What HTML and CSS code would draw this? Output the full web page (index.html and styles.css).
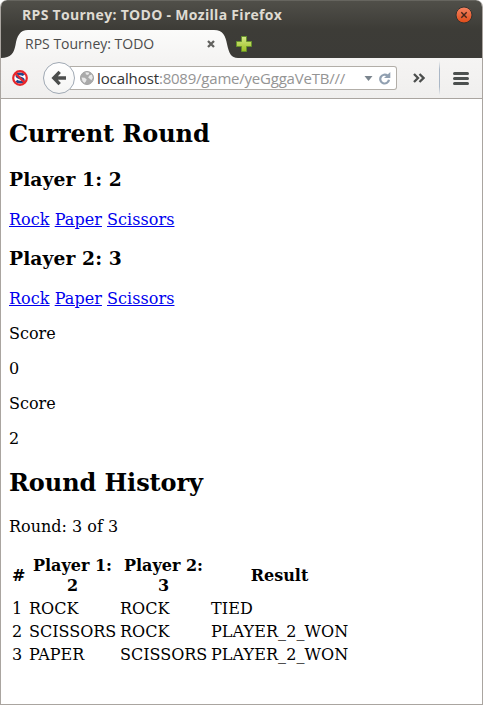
FILE: index.html
```html
<!DOCTYPE html>
<html lang="en">
<head>
<meta charset="utf-8">
<title>RPS Tourney: TODO</title>
<link rel="stylesheet" href="styles.css">
</head>
<body>
<div class="window">
  <header class="frame">
    <div class="titlebar">
      <span class="title">RPS Tourney: TODO - Mozilla Firefox</span>
      <svg class="close" width="18" height="18" viewBox="0 0 18 18">
        <defs><linearGradient id="orange" x1="0" y1="0" x2="0" y2="1"><stop offset="0" stop-color="#f58463"/><stop offset="1" stop-color="#df4b17"/></linearGradient></defs>
        <circle cx="9" cy="9" r="8" fill="url(#orange)" stroke="#34332f"/>
        <path d="M6.3 6.3l5.4 5.4M11.7 6.3l-5.4 5.4" stroke="#45251b" stroke-width="1.4"/>
      </svg>
    </div>
    <div class="tabs">
      <div class="tab">
        <svg class="tab-shape" width="238" height="29" viewBox="0 0 238 29">
          <defs><linearGradient id="tabfill" x1="0" y1="0" x2="0" y2="1"><stop offset="0" stop-color="#fbfbfa"/><stop offset="1" stop-color="#f5f4f3"/></linearGradient></defs>
          <path d="M0 28C10 28 13 23 14.5 15C16 6 19 0 27 0H213C222 0 224.5 6 226 14C228 23 230 28 237 28V29H0Z" fill="url(#tabfill)"/>
        </svg>
        <span class="tab-label">RPS Tourney: TODO</span>
        <svg class="tab-close" width="8" height="8" viewBox="0 0 8 8"><path d="M1 1l6 6M7 1L1 7" stroke="#62625f" stroke-width="2.3"/></svg>
      </div>
      <svg class="plus" width="16" height="16" viewBox="0 0 16 16">
        <defs><linearGradient id="green" x1="0" y1="0" x2="0" y2="1"><stop offset="0" stop-color="#d5e88a"/><stop offset="1" stop-color="#9dbf20"/></linearGradient></defs>
        <path d="M5.5.5h5v5h5v5h-5v5h-5v-5h-5v-5h5z" fill="url(#green)" stroke="#67922c"/>
      </svg>
    </div>
  </header>
  <nav class="toolbar">
    <svg class="noscript" width="16" height="16" viewBox="0 0 16 16">
      <circle cx="8" cy="8" r="7" fill="#fff"/>
      <path d="M11.6 5.4C10.8 3.6 5 3.2 4.9 5.8C4.9 8.2 11.4 7.4 11.4 10.2C11.3 12.8 5.8 12.6 4.400 10.600" fill="none" stroke="#23488f" stroke-width="2.800"/>
      <circle cx="8" cy="8" r="6.800" fill="none" stroke="#e8262b" stroke-width="2.200"/>
      <path d="M3 3l10 10" stroke="#e8262b" stroke-width="2.200"/>
    </svg>
    <div class="back">
      <svg width="16" height="16" viewBox="0 0 16 16"><path d="M8.7 1.8L2.8 8l5.9 6.2M3 8h12" fill="none" stroke="#4c4e4d" stroke-width="3.4"/></svg>
    </div>
    <div class="address">
      <svg class="globe" width="14" height="14" viewBox="0 0 14 14">
        <circle cx="7" cy="7" r="6.5" fill="#aaa" stroke="#a2a2a2"/>
        <path d="M5.500 1.200l3.200.2.4 1.500-1.800 1.100-1.500-.7zM1.500 6.600l3.200.2 2 1.600-.8 2-1.600 1.600-1.800-2zM9.300 4.500l2.500-1 1 3.200-1.400 2.500-1.700-1.500-1.500-1.300z" fill="#e8e8e8"/>
      </svg>
      <span class="url"><span class="host">localhost</span><span class="path">:8089/game/yeGggaVeTB///</span></span>
      <svg class="url-tools" width="32" height="14" viewBox="0 0 32 14">
        <path d="M4.500 5h8L8.500 10z" fill="#7b858e"/>
        <path d="M27.500 4.700A4.400 4.400 0 1 0 29 8.800" fill="none" stroke="#91a0b1" stroke-width="2.200"/>
        <path d="M30.300 1v6H24z" fill="#91a0b1"/>
      </svg>
    </div>
    <svg class="more" width="12" height="10" viewBox="0 0 12 10"><path d="M1 1l4 4-4 4M6.5 1l4 4-4 4" fill="none" stroke="#4c4e4d" stroke-width="2.3"/></svg>
    <span class="divider"></span>
    <svg class="menu" width="16" height="13" viewBox="0 0 16 13"><path d="M1.5 1.5h13M1.5 6.5h13M1.5 11.5h13" stroke="#4c504f" stroke-width="3" stroke-linecap="round"/></svg>
  </nav>
  <main class="page">
    <h2>Current Round</h2>
    <h3>Player 1: 2</h3>
    <p><a href="#">Rock</a> <a href="#">Paper</a> <a href="#">Scissors</a></p>
    <h3>Player 2: 3</h3>
    <p><a href="#">Rock</a> <a href="#">Paper</a> <a href="#">Scissors</a></p>
    <p>Score</p>
    <p>0</p>
    <p>Score</p>
    <p>2</p>
    <h2>Round History</h2>
    <p>Round: 3 of 3</p>
    <table>
      <colgroup><col class="c-num"><col class="c-player"><col class="c-player"><col class="c-result"></colgroup>
      <thead><tr><th>#</th><th>Player 1: 2</th><th>Player 2: 3</th><th>Result</th></tr></thead>
      <tbody>
        <tr><td>1</td><td>ROCK</td><td>ROCK</td><td>TIED</td></tr>
        <tr><td>2</td><td>SCISSORS</td><td>ROCK</td><td>PLAYER_2_WON</td></tr>
        <tr><td>3</td><td>PAPER</td><td>SCISSORS</td><td>PLAYER_2_WON</td></tr>
      </tbody>
    </table>
  </main>
</div>
</body>
</html>
```
FILE: styles.css
```css
* { box-sizing: border-box; }
html { background: #fff; }
body { margin: 0; overflow: hidden; }
svg { display: block; flex: none; }
.window {
  width: 483px;
  height: 705px;
  display: flex;
  flex-direction: column;
  border: solid #aaa5a0;
  border-width: 0 1px 1px;
  border-radius: 7px 7px 0 0;
  overflow: hidden;
  background: #fff;
}
.frame {
  flex: none;
  height: 58px;
  margin: 0 -1px;
  padding: 0 1px;
  border-top: 1px solid #66655f;
  border-radius: 7px 7px 0 0;
  background: linear-gradient(#504f49, #3d3c37 28px, #3c3b37);
}
.titlebar {
  height: 29px;
  padding: 0 9px 2px 21px;
  display: flex;
  align-items: center;
  justify-content: space-between;
  font: bold 14px/26px "Open Sans", sans-serif;
  letter-spacing: 0.3px;
  color: #dfdbd2;
}
.title { white-space: nowrap; }
.tabs { height: 28px; display: flex; align-items: flex-start; }
.tab {
  position: relative;
  width: 235px;
  height: 28px;
  padding: 0 21px 0 24px;
  display: flex;
  align-items: center;
  justify-content: space-between;
  font: 14px/28px "Open Sans", sans-serif;
  color: #4c4c4c;
}
.tab-shape { position: absolute; left: 0; top: 0; }
.tab-label, .tab-close { position: relative; white-space: nowrap; }
.plus { margin-top: 6px; }
.toolbar {
  flex: none;
  height: 41px;
  padding-left: 11px;
  display: flex;
  align-items: center;
  background: linear-gradient(#f5f4f3, #f0efee);
  border-bottom: 1px solid #aaa5a0;
}
.back {
  position: relative;
  width: 32px;
  height: 32px;
  margin-left: 15px;
  display: flex;
  align-items: center;
  justify-content: center;
  border: 1px solid #a0a9b4;
  border-radius: 50%;
  background: linear-gradient(#fff, #f5f5f4);
  z-index: 1;
}
.address {
  width: 327px;
  height: 24px;
  margin-left: -5px;
  padding: 0 4px 0 10px;
  display: flex;
  align-items: center;
  border: 1px solid #b2aea8;
  border-left: 0;
  border-radius: 0 3px 3px 0;
  background: #fff;
}
.url {
  flex: 1;
  min-width: 0;
  margin-left: 3px;
  white-space: nowrap;
  font: 15px/22px "Open Sans", sans-serif;
  letter-spacing: -0.22px;
}
.host { color: #333; letter-spacing: -0.1px; }
.path { color: #949494; }
.more { margin-left: 16px; }
.divider {
  width: 1px;
  height: 34px;
  margin: 0 13px 0 14px;
  background: linear-gradient(transparent, #aab7c6 25%, #aab7c6 75%, transparent);
}
.page {
  flex: 1;
  padding: 1px 8px 0;
  font: 16px/19px "DejaVu Serif", serif;
  color: #000;
}
.page a { color: #0000ee; letter-spacing: 0.06px; }
h2 { margin: 20px 0; font-size: 24px; line-height: 28px; letter-spacing: -0.08px; }
h3 { margin: 18px 0 20px; font-size: 18.72px; line-height: 22px; letter-spacing: 0.09px; }
p { margin: 16px 0; }
p + h2 { margin-top: 21px; }
table { width: 342px; margin-top: 17px; table-layout: fixed; border-spacing: 2px; }
th, td { padding: 1px; }
th { line-height: 20px; padding-bottom: 0; }
td:last-child { letter-spacing: 0.08px; }
.c-num { width: 15px; }
.c-player { width: 89px; }
.c-result { width: 139px; }
```
